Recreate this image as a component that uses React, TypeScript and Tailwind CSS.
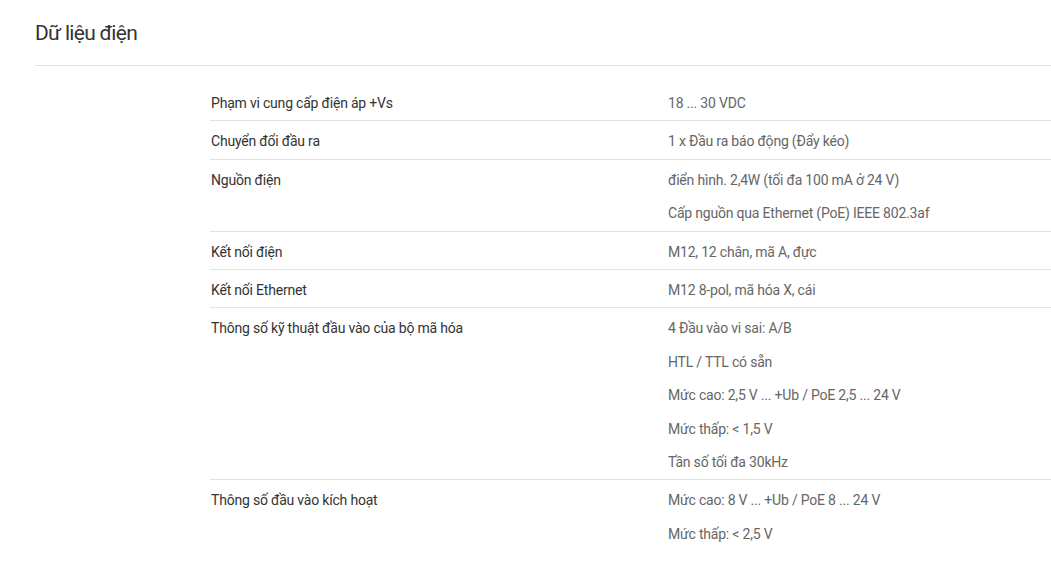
const rows: { label: string; values: string[] }[] = [
  { label: 'Phạm vi cung cấp điện áp +Vs', values: ['18 ... 30 VDC'] },
  { label: 'Chuyển đổi đầu ra', values: ['1 x Đầu ra báo động (Đẩy kéo)'] },
  {
    label: 'Nguồn điện',
    values: ['điển hình. 2,4W (tối đa 100 mA ở 24 V)', 'Cấp nguồn qua Ethernet (PoE) IEEE 802.3af'],
  },
  { label: 'Kết nối điện', values: ['M12, 12 chân, mã A, đực'] },
  { label: 'Kết nối Ethernet', values: ['M12 8-pol, mã hóa X, cái'] },
  {
    label: 'Thông số kỹ thuật đầu vào của bộ mã hóa',
    values: [
      '4 Đầu vào vi sai: A/B',
      'HTL / TTL có sẵn',
      'Mức cao: 2,5 V ... +Ub / PoE 2,5 ... 24 V',
      'Mức thấp: < 1,5 V',
      'Tần số tối đa 30kHz',
    ],
  },
  {
    label: 'Thông số đầu vào kích hoạt',
    values: ['Mức cao: 8 V ... +Ub / PoE 8 ... 24 V', 'Mức thấp: < 2,5 V'],
  },
];

export default function App() {
  return (
    <div className="min-h-[562px] w-[1051px] overflow-hidden bg-white font-['Roboto',sans-serif]">
      <div className="pl-[35px] pt-[20px]">
        <h2 className="text-[21px] leading-[26px] tracking-[-0.7px] text-[#333]">Dữ liệu điện</h2>
        <div className="mt-[19px] h-px bg-[#e3e3e3]" />
      </div>
      <div className="ml-[210px] mt-[17px]">
        {rows.map((r, idx) => (
          <div
            key={r.label}
            className={`flex pt-[4px] text-[14px] tracking-[-0.2px] ${
              idx < rows.length - 1 ? 'border-b border-[#e3e3e3]' : ''
            }`}
          >
            <div className="w-[458px] shrink-0 pl-px leading-[33.4px] text-[#333]">{r.label}</div>
            <div className="flex-1 text-[#666]">
              {r.values.map(v => (
                <div key={v} className="leading-[33.4px]">
                  {v}
                </div>
              ))}
            </div>
          </div>
        ))}
      </div>
    </div>
  );
}
